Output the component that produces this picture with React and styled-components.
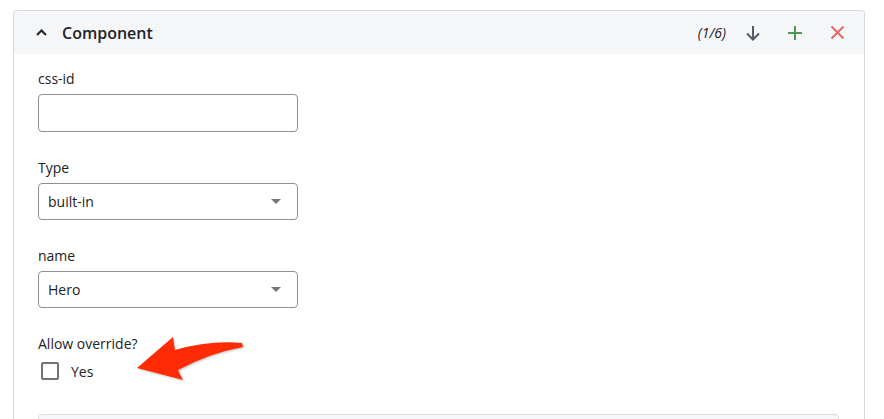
import React from "react";
import styled, { createGlobalStyle } from "styled-components";

const GlobalStyle = createGlobalStyle`
  body {
    margin: 0;
    background: #ffffff;
    font-family: "Open Sans", "Noto Sans", sans-serif;
    color: #222222;
  }
`;

const Page = styled.div`
  height: 419px;
  overflow: hidden;
  padding: 10px 19px 0 13px;
  box-sizing: border-box;
`;

const Panel = styled.section`
  position: relative;
  border: 1px solid #d8dce2;
  border-bottom: none;
  border-radius: 4px 4px 0 0;
`;

const Header = styled.header`
  height: 43px;
  display: flex;
  align-items: center;
  padding: 0 15px 0 22px;
  background: #f5f6f8;
  border-radius: 4px 4px 0 0;
`;

const Title = styled.h2`
  margin: 0 0 0 15px;
  font-size: 16px;
  font-weight: 600;
  color: #1f2328;
  flex: 1;
`;

const Count = styled.span`
  font-size: 14px;
  font-style: italic;
  color: #222;
  margin-right: 15px;
`;

const IconButton = styled.button`
  width: 24px;
  height: 24px;
  padding: 0;
  margin-left: ${(p) => (p.$first ? "0" : "18px")};
  border: none;
  background: none;
  display: flex;
  align-items: center;
  justify-content: center;
  color: ${(p) => p.$color};
  cursor: pointer;
`;

const Body = styled.div`
  padding: 15px 25px 0 24px;
`;

const Field = styled.div`
  margin-bottom: 26px;
`;

const Label = styled.div`
  font-size: 14px;
  line-height: 20px;
  margin-bottom: 5px;
  color: #222;
`;

const TextInput = styled.div`
  width: 260px;
  height: 38px;
  box-sizing: border-box;
  border: 1px solid #8e8e8e;
  border-radius: 4px;
`;

const Select = styled.div`
  width: 260px;
  height: 37px;
  box-sizing: border-box;
  border: 1px solid #8e8e8e;
  border-radius: 4px;
  display: flex;
  align-items: center;
  justify-content: space-between;
  padding: 0 16px 0 9px;
  font-size: 14px;
  color: #222;
`;

const Caret = styled.span`
  width: 0;
  height: 0;
  border-left: 5px solid transparent;
  border-right: 5px solid transparent;
  border-top: 5px solid #777;
`;

const CheckRow = styled.label`
  display: flex;
  align-items: center;
  height: 18px;
  margin: 8px 0 0 3px;
  font-size: 14px;
  color: #222;
`;

const Box = styled.span`
  width: 18px;
  height: 18px;
  box-sizing: border-box;
  border: 2px solid #737373;
  border-radius: 2px;
  margin-right: 12px;
`;

const Nested = styled.div`
  margin-top: 34px;
  height: 40px;
  border: 1px solid #d8dce2;
  border-radius: 4px;
  background: #f6f7f9;
`;

const Pointer = styled.svg`
  position: absolute;
  left: 96px;
  top: 309px;
  overflow: visible;
  filter: drop-shadow(1px 1px 1px rgba(0, 0, 0, 0.25));
`;

export default function App() {
  return (
    <Page>
      <GlobalStyle />
      <Panel>
        <Header>
          <svg width="11" height="7" viewBox="0 0 11 7">
            <path d="M1 6 L5.5 1.5 L10 6" fill="none" stroke="#222" strokeWidth="2" />
          </svg>
          <Title>Component</Title>
          <Count>(1/6)</Count>
          <IconButton $first $color="#535a63">
            <svg width="16" height="16" viewBox="0 0 16 16">
              <path d="M8 1 V14.5 M2 8.5 L8 14.5 L14 8.5" fill="none" stroke="currentColor" strokeWidth="2" />
            </svg>
          </IconButton>
          <IconButton $color="#4c9a52">
            <svg width="16" height="16" viewBox="0 0 16 16">
              <path d="M8 1 V15 M1 8 H15" fill="none" stroke="currentColor" strokeWidth="2" />
            </svg>
          </IconButton>
          <IconButton $color="#e36a6a">
            <svg width="15" height="15" viewBox="0 0 15 15">
              <path d="M1.5 1.5 L13.5 13.5 M13.5 1.5 L1.5 13.5" fill="none" stroke="currentColor" strokeWidth="2" />
            </svg>
          </IconButton>
        </Header>
        <Body>
          <Field>
            <Label>css-id</Label>
            <TextInput />
          </Field>
          <Field>
            <Label>Type</Label>
            <Select>
              built-in
              <Caret />
            </Select>
          </Field>
          <Field>
            <Label>name</Label>
            <Select>
              Hero
              <Caret />
            </Select>
          </Field>
          <div>
            <Label>Allow override?</Label>
            <CheckRow>
              <Box />
              Yes
            </CheckRow>
          </div>
          <Nested />
        </Body>
        <Pointer width="140" height="70" viewBox="0 0 140 70">
          <path
            d="M27 48 L63 17 Q64 25 65 30 Q100 20 132 23 L133 27 Q100 33 68 50 Q70 55 73 60 Z"
            fill="#fe2b04"
          />
        </Pointer>
      </Panel>
    </Page>
  );
}
